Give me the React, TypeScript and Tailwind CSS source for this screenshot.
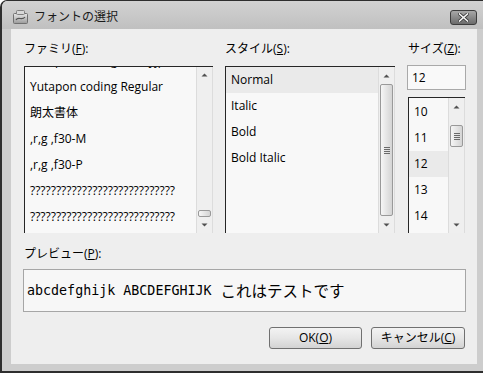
import React from "react";

const UI = "font-['Open_Sans','Noto_Sans_CJK_JP',sans-serif]";

function Up() {
  return (
    <svg width="7" height="4" viewBox="0 0 7 4">
      <path d="M0.5 3.5 L3.5 0.5 L6.5 3.5 Z" fill="#505050" />
    </svg>
  );
}
function Down() {
  return (
    <svg width="7" height="4" viewBox="0 0 7 4">
      <path d="M0.5 0.5 L3.5 3.5 L6.5 0.5 Z" fill="#505050" />
    </svg>
  );
}

function Grip() {
  return (
    <div className="flex flex-col gap-[1px]">
      <div className="w-[6px] h-[1px] bg-[#6a6a6a]" />
      <div className="w-[6px] h-[1px] bg-[#6a6a6a]" />
      <div className="w-[6px] h-[1px] bg-[#6a6a6a]" />
      <div className="w-[6px] h-[1px] bg-[#6a6a6a]" />
    </div>
  );
}

function VScroll({ thumbClass, grip }: { thumbClass: string; grip: boolean }) {
  return (
    <div className="w-[17px] h-full flex flex-col bg-[#efefef] border-l border-r border-[#dcdcdc]">
      <div className="h-[17px] flex items-center justify-center">
        <Up />
      </div>
      <div className="flex-1 flex flex-col px-[1px]">
        <div
          className={
            thumbClass +
            " rounded-[2px] border border-[#999999] bg-gradient-to-r from-[#f6f6f6] to-[#d4d4d4] flex items-center justify-center"
          }
        >
          {grip ? <Grip /> : null}
        </div>
      </div>
      <div className="h-[17px] flex items-center justify-center">
        <Down />
      </div>
    </div>
  );
}

function Row({ text, sel }: { text: string; sel?: boolean }) {
  return (
    <div
      className={
        "h-[26px] shrink-0 flex items-center pl-[5px] whitespace-nowrap text-[12px] text-black " +
        (sel ? "bg-[#eaeaea]" : "")
      }
    >
      {text}
    </div>
  );
}

function CloseBtn() {
  return (
    <div className="w-[27px] h-[15px] rounded-[3px] border border-[#3c3c3c] bg-gradient-to-b from-[#a8a8a8] to-[#6c6c6c] flex items-center justify-center">
      <svg width="11" height="9" viewBox="0 0 11 9">
        <path d="M1.5 1 L9.5 8 M9.5 1 L1.5 8" stroke="#3a3a3a" strokeWidth="3.2" strokeLinecap="square" />
        <path d="M1.5 1 L9.5 8 M9.5 1 L1.5 8" stroke="#f4f4f4" strokeWidth="1.6" strokeLinecap="square" />
      </svg>
    </div>
  );
}

function TitleIcon() {
  return (
    <svg width="15" height="14" viewBox="0 0 15 14">
      <defs>
        <linearGradient id="ig" x1="0" y1="0" x2="0" y2="1">
          <stop offset="0" stopColor="#e8e8e8" />
          <stop offset="1" stopColor="#9a9a9a" />
        </linearGradient>
      </defs>
      <rect x="0.5" y="3.5" width="14" height="10" rx="1" fill="url(#ig)" stroke="#707070" />
      <rect x="3.5" y="0.5" width="8" height="4" rx="1" fill="#d8d8d8" stroke="#808080" />
      <path d="M3 10 C5 6, 9 11, 12 7" stroke="#555" strokeWidth="1.2" fill="none" />
    </svg>
  );
}

export default function App() {
  return (
    <div
      className={
        UI +
        " w-[483px] h-[373px] overflow-hidden flex flex-col bg-[#cdcdcd] border-t border-l-2 border-b-2 border-[#2e2e2e] rounded-tl-[7px]"
      }
    >
      {/* title bar */}
      <div className="h-[28px] shrink-0 flex items-center bg-gradient-to-b from-[#d2d2d2] to-[#c0c0c0] pl-[11px] pr-[6px] pt-[4px]">
        <TitleIcon />
        <span className="ml-[6px] text-[12px] text-[#1a1a1a] leading-[16px]">フォントの選択</span>
        <div className="ml-auto">
          <CloseBtn />
        </div>
      </div>

      {/* content */}
      <div className="h-[335px] shrink-0 ml-[9px] mr-[6px] bg-[#eeeeee] pl-[12px] pr-[11px] pt-[12px] flex flex-col">
        <div className="flex">
          {/* family */}
          <div className="ml-[1px] w-[189px] flex flex-col">
            <div className="h-[25px] text-[12px] leading-[16px] text-black">
              ファミリ(<span className="underline">F</span>):
            </div>
            <div className="h-[167px] flex border-l border-t border-[#262626] bg-[#f8f8f8]">
              <div className="flex-1 overflow-hidden flex flex-col">
                <div className="mt-[-19px] flex flex-col">
                  <Row text="Yutapon coding Heavyjp" />
                  <Row text="Yutapon coding Regular" />
                  <Row text="朗太書体" />
                  <Row text=",r,g ,f30-M" />
                  <Row text=",r,g ,f30-P" />
                  <Row text="????????????????????????????" />
                  <Row text="????????????????????????????" />
                </div>
              </div>
              <VScroll thumbClass="mt-[126px] h-[7px]" grip={false} />
            </div>
          </div>

          {/* style */}
          <div className="ml-[12px] w-[170px] flex flex-col">
            <div className="h-[25px] text-[12px] leading-[16px] text-black">
              スタイル(<span className="underline">S</span>):
            </div>
            <div className="h-[167px] flex border-l border-t border-[#262626] bg-[#f8f8f8]">
              <div className="flex-1 overflow-hidden flex flex-col">
                <Row text="Normal" sel />
                <Row text="Italic" />
                <Row text="Bold" />
                <Row text="Bold Italic" />
              </div>
              <VScroll thumbClass="h-[132px]" grip={true} />
            </div>
          </div>

          {/* size */}
          <div className="ml-[12px] w-[59px] flex flex-col">
            <div className="h-[24px] text-[12px] leading-[16px] text-black pl-[1px]">
              サイズ(<span className="underline">Z</span>):
            </div>
            <div className="h-[25px] border border-[#a9a9a9] bg-[#f9f9f9] flex items-center pl-[4px] text-[12px] text-black">
              12
            </div>
            <div className="mt-[7px] ml-[1px] w-[57px] h-[136px] flex border-l border-t border-[#262626] bg-[#f8f8f8]">
              <div className="flex-1 overflow-hidden flex flex-col pt-[1px]">
                <Row text="10" />
                <Row text="11" />
                <Row text="12" sel />
                <Row text="13" />
                <Row text="14" />
              </div>
              <VScroll thumbClass="mt-[10px] h-[22px]" grip={true} />
            </div>
          </div>
        </div>

        {/* preview */}
        <div className="h-[36px] pt-[13px] pl-[1px] text-[12px] leading-[16px] text-black">
          プレビュー(<span className="underline">P</span>):
        </div>
        <div className="h-[43px] border border-[#a6a6a6] bg-[#f7f7f7] flex items-center pl-[3px] text-black whitespace-nowrap">
          <span className="font-['DejaVu_Sans_Mono',monospace] text-[13.33px]">abcdefghijk ABCDEFGHIJK</span>
          <span className="ml-[9px] font-['Noto_Sans_CJK_JP',sans-serif] text-[15.5px]">これはテストです</span>
        </div>

        {/* buttons */}
        <div className="mt-[15px] flex justify-end gap-[9px] pr-[1px]">
          <div className="w-[93px] h-[22px] rounded-[3px] border border-[#707070] bg-gradient-to-b from-[#f3f3f3] via-[#e6e6e6] to-[#d3d3d3] flex items-center justify-center text-[12px] text-black">
            OK(<span className="underline">O</span>)
          </div>
          <div className="w-[94px] h-[22px] rounded-[3px] border border-[#707070] bg-gradient-to-b from-[#f3f3f3] via-[#e6e6e6] to-[#d3d3d3] flex items-center justify-center text-[12px] text-black">
            キャンセル(<span className="underline">C</span>)
          </div>
        </div>
      </div>
    </div>
  );
}
